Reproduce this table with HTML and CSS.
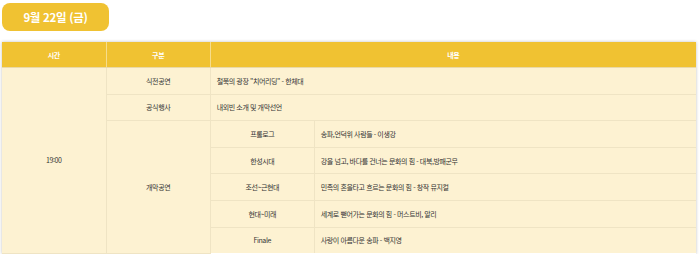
FILE: index.html
```html
<!DOCTYPE html>
<html lang="ko">
<head>
<meta charset="utf-8">
<link rel="stylesheet" href="styles.css">
</head>
<body>
<div class="wrap">
  <div class="date-badge">9월 22일 (금)</div>
  <table class="schedule">
    <colgroup>
      <col class="c15"><col class="c15"><col class="c15"><col class="c55">
    </colgroup>
    <thead>
      <tr><th>시간</th><th>구분</th><th colspan="2">내용</th></tr>
    </thead>
    <tbody>
      <tr><td rowspan="7" class="center">19:00</td><td class="center">식전공연</td><td colspan="2">철쭉의 광장 "치어리딩" - 한체대</td></tr>
      <tr><td class="center">공식행사</td><td colspan="2">내외빈 소개 및 개막선언</td></tr>
      <tr><td rowspan="5" class="center">개막공연</td><td class="center">프롤로그</td><td>송파,언덕위 사람들 - 이생강</td></tr>
      <tr><td class="center">한성시대</td><td>강을 넘고, 바다를 건너는 문화의 힘 - 대북,방패군무</td></tr>
      <tr><td class="center">조선~근현대</td><td>민족의 혼을타고 흐르는 문화의 힘 - 창작 뮤지컬</td></tr>
      <tr><td class="center">현대~미래</td><td>세계로 뻗어가는 문화의 힘 - 머스트비, 알리</td></tr>
      <tr><td class="center">Finale</td><td>사랑이 아름다운 송파 - 백지영</td></tr>
    </tbody>
  </table>
</div>
</body>
</html>
```
FILE: styles.css
```css
html, body {
  margin: 0;
  padding: 0;
  background: #ffffff;
}
body {
  font-family: "Noto Sans CJK KR", "Noto Sans", sans-serif;
  color: #333333;
}
.wrap {
  padding: 3px 4px 0 2px;
}
.date-badge {
  width: 107px;
  height: 28px;
  box-sizing: border-box;
  background: #f0c232;
  border-radius: 8px;
  color: #ffffff;
  font-weight: 700;
  font-size: 11.5px;
  line-height: 28px;
  text-align: center;
  letter-spacing: -0.3px;
}
.schedule {
  margin-top: 11px;
  width: 694px;
  border-collapse: collapse;
  table-layout: fixed;
  box-shadow: 0 0 3px rgba(0, 0, 0, 0.25);
  font-size: 7px;
  letter-spacing: -0.4px;
}
.c15 { width: 15%; }
.c55 { width: 55%; }
.schedule th {
  background: #f0c232;
  color: #ffffff;
  font-weight: 700;
  height: 25px;
  padding: 0;
  border-left: 1px solid #f6dd8c;
  border-bottom: 1px solid #e9d9a8;
  text-align: center;
}
.schedule th:first-child { border-left: none; }
.schedule td {
  background: #fdf2d2;
  height: 25.6px;
  padding: 0 0 0 6px;
  border: 1px solid #efe4c4;
  text-align: left;
}
.schedule td.center {
  text-align: center;
  padding: 0;
}
.schedule tbody tr:first-child td { border-top: none; }
.schedule tbody td[rowspan="7"] { border-left: none; }
.schedule td:last-child { border-right: none; }
.schedule tbody tr:last-child td { border-bottom: none; }
```
